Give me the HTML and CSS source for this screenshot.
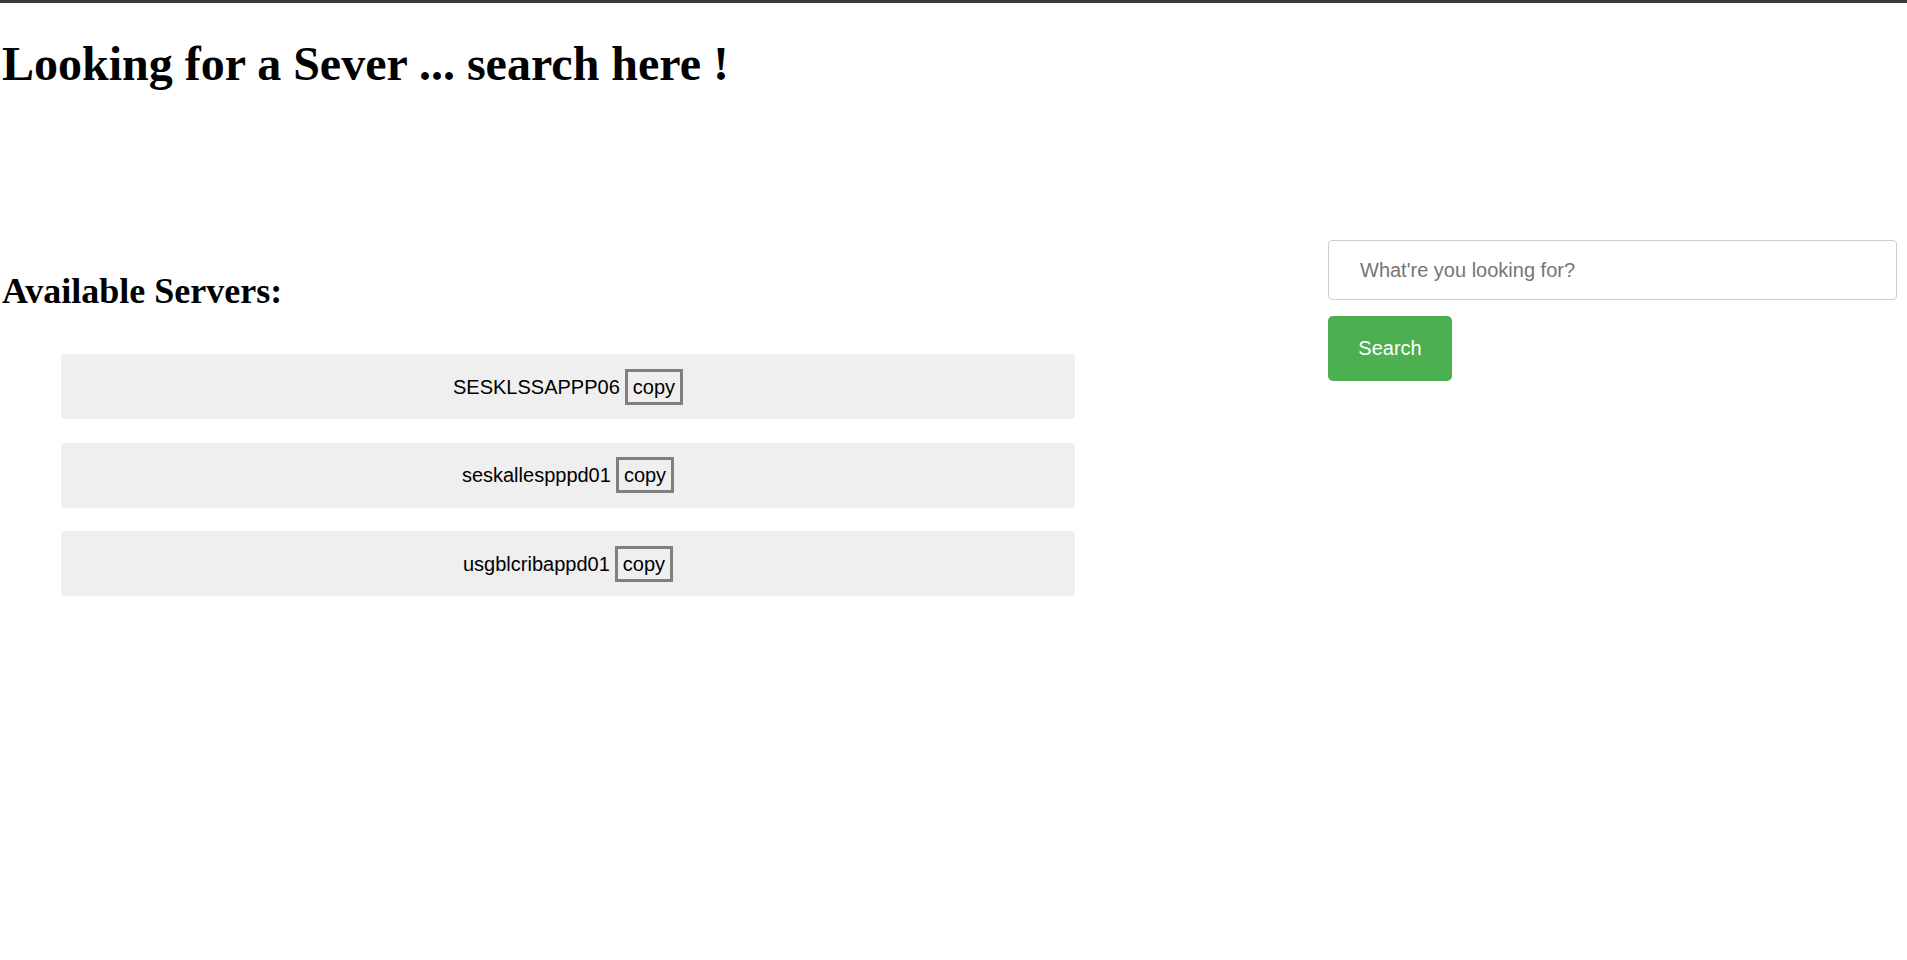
FILE: index.html
```html
<!DOCTYPE html>
<html lang="en">
<head>
<meta charset="utf-8">
<title>Server Search</title>
<link rel="stylesheet" href="styles.css">
</head>
<body>
<h1 class="title">Looking for a Sever ... search here !</h1>
<div class="main">
  <div class="servers">
    <h2 class="servers-title">Available Servers:</h2>
    <ul class="server-list">
      <li class="server-item"><span class="server-name">SESKLSSAPPP06</span><button class="copy-btn">copy</button></li>
      <li class="server-item"><span class="server-name">seskallespppd01</span><button class="copy-btn">copy</button></li>
      <li class="server-item"><span class="server-name">usgblcribappd01</span><button class="copy-btn">copy</button></li>
    </ul>
  </div>
  <form class="search-form">
    <input class="search-input" type="text" placeholder="What're you looking for?">
    <button class="search-btn" type="button">Search</button>
  </form>
</div>
</body>
</html>
```
FILE: styles.css
```css
html, body {
  margin: 0;
  padding: 0;
  background: #ffffff;
}
body {
  border-top: 3px solid #3a3a3a;
  font-family: "Liberation Serif", "Times New Roman", serif;
  color: #000;
}
.title {
  font-family: "Liberation Serif", "Times New Roman", serif;
  font-weight: bold;
  font-size: 48px;
  margin: 33px 0 0 2px;
}
.main {
  display: flex;
  align-items: flex-start;
  margin-top: 149px;
}
.servers {
  width: 1075px;
  flex: none;
}
.servers-title {
  font-family: "Liberation Serif", "Times New Roman", serif;
  font-weight: bold;
  font-size: 36px;
  margin: 30px 0 0 2px;
}
.server-list {
  list-style: none;
  margin: 42px 0 0;
  padding: 0 0 0 61px;
}
.server-item {
  display: flex;
  align-items: center;
  justify-content: center;
  gap: 5px;
  height: 65px;
  margin-bottom: 23.5px;
  background: #efefef;
  border-radius: 4px;
  font-family: "Liberation Sans", Arial, sans-serif;
  font-size: 20px;
}
.server-name {
  line-height: 24px;
}
.copy-btn {
  font-family: "Liberation Sans", Arial, sans-serif;
  font-size: 20px;
  line-height: 24px;
  color: #000;
  background: transparent;
  border: 3px solid #808080;
  border-radius: 0;
  padding: 3px 5px;
  margin: 0;
}
.search-form {
  margin-left: 253px;
  width: 569px;
  display: flex;
  flex-direction: column;
  align-items: flex-start;
}
.search-input {
  box-sizing: border-box;
  width: 569px;
  height: 60px;
  border: 1px solid #cccccc;
  border-radius: 4px;
  padding: 0 20px 0 31px;
  font-family: "Liberation Sans", Arial, sans-serif;
  font-size: 20px;
  color: #333;
  margin: 0;
}
.search-input::placeholder {
  color: #757575;
}
.search-btn {
  margin-top: 16px;
  box-sizing: border-box;
  width: 124px;
  height: 65px;
  background: #4caf50;
  color: #fff;
  border: none;
  border-radius: 5px;
  font-family: "Liberation Sans", Arial, sans-serif;
  font-size: 20px;
  padding: 0;
}
```
